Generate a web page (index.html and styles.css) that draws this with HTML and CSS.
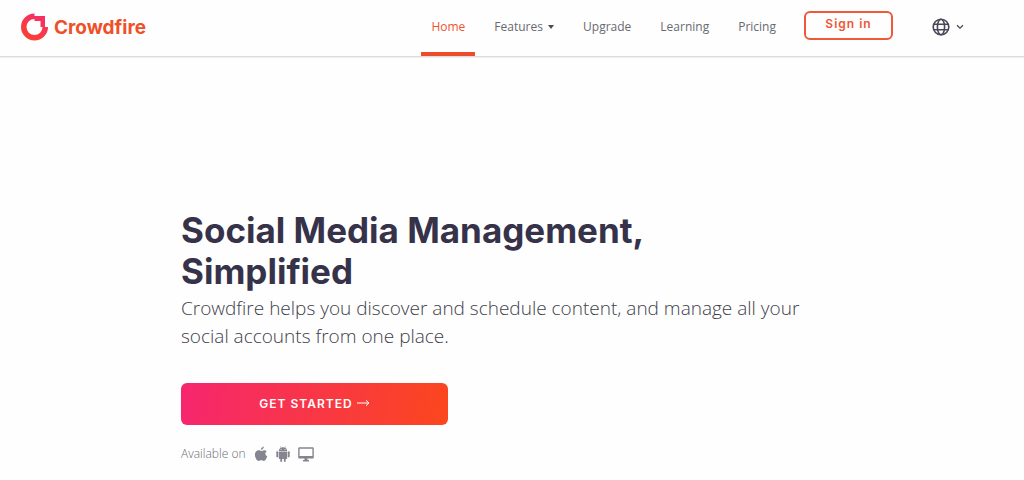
FILE: index.html
```html
<!DOCTYPE html>
<html lang="en">
<head>
<meta charset="utf-8">
<meta name="viewport" content="width=device-width, initial-scale=1">
<title>Crowdfire</title>
<link rel="stylesheet" href="styles.css">
</head>
<body>
<header class="header">
  <a class="brand" href="#">
    <svg class="brand-mark" viewBox="0 0 28 28" aria-hidden="true">
      <defs><linearGradient id="flame" x1="1" y1="0" x2="0.4" y2="1"><stop offset="0" stop-color="#f42a72"/><stop offset="1" stop-color="#fa4032"/></linearGradient></defs>
      <path fill="url(#flame)" d="M14 .5V3H24.500V14H27.500A13.500 13.500 0 1 1 14 .5ZM14 6A8 8 0 1 0 22 14H20V8H14Z"/>
    </svg>
    <span>Crowdfire</span>
  </a>
  <nav class="nav" aria-label="Main">
    <a class="nav-link active" href="#">Home</a>
    <a class="nav-link" href="#">Features <span class="caret"></span></a>
    <a class="nav-link" href="#">Upgrade</a>
    <a class="nav-link" href="#">Learning</a>
    <a class="nav-link" href="#">Pricing</a>
  </nav>
  <button class="sign-in" type="button">Sign in</button>
  <button class="language" type="button" aria-label="Language">
    <svg class="globe" viewBox="0 0 18 18" fill="none" stroke="currentColor" stroke-width="1.6" aria-hidden="true"><circle cx="9" cy="9" r="7.800"/><ellipse cx="9" cy="9" rx="3.600" ry="7.800"/><path d="M1.800 6.300H16.200M1.800 11.700H16.200"/></svg>
    <svg class="chevron" viewBox="0 0 8 6" fill="none" stroke="currentColor" stroke-width="1.300" aria-hidden="true"><path d="M1 1.200L4 4.200L7 1.200"/></svg>
  </button>
</header>
<main class="hero">
  <h1 class="title">Social Media Management, Simplified</h1>
  <p class="lead">Crowdfire helps you discover and schedule content, and manage all your social accounts from one place.</p>
  <button class="cta" type="button">GET STARTED <svg class="arrow" viewBox="0 0 13 8" fill="none" stroke="currentColor" aria-hidden="true"><path d="M0 4H12M9 1.300L12 4L9 6.700"/></svg></button>
  <div class="platforms">
    <span>Available on</span>
    <svg class="apple" viewBox="0 0 14 16" fill="currentColor" role="img" aria-label="Apple"><path d="M9.800.5C9.900 2.300 8.500 3.800 6.900 3.900 6.700 2.300 8.200.7 9.800.5ZM12.600 5.500C11 6.500 10.700 8.900 13.200 10.300 12.500 12.600 11.200 14.800 9.900 14.900 8.900 15 8.500 14.300 7.300 14.300 6.100 14.300 5.600 15 4.700 15 2.700 14.900.9 11.500.9 8.800.9 6 2.700 4.300 4.600 4.300 5.700 4.300 6.500 5 7.300 5 8 5 9 4.200 10.300 4.200 11.300 4.200 12.100 4.700 12.600 5.500Z"/></svg>
    <svg class="android" viewBox="0 0 14 16" fill="currentColor" role="img" aria-label="Android"><path fill-rule="evenodd" d="M2.800 4.900C2.900 3.400 3.700 2.300 4.900 1.700L4.200.4 4.600.2 5.300 1.500A5 5 0 0 1 8.700 1.500L9.400.2 9.800.4 9.100 1.700C10.300 2.300 11.100 3.400 11.200 4.900ZM4.600 3V3.800H5.400V3ZM8.600 3V3.800H9.400V3Z"/><path d="M2.800 5.400H11.200V12.200Q11.200 13 10.400 13H9.700V15.200Q9.700 16 8.800 16 7.900 16 7.900 15.200V13H6.100V15.200Q6.100 16 5.200 16 4.300 16 4.300 15.200V13H3.600Q2.800 13 2.800 12.200Z"/><rect x="0.300" y="5.300" width="1.900" height="6" rx=".9"/><rect x="11.800" y="5.300" width="1.900" height="6" rx=".9"/></svg>
    <svg class="desktop" viewBox="0 0 16 15" fill="currentColor" role="img" aria-label="Desktop"><path fill-rule="evenodd" d="M1.300.3H14.700Q15.800.3 15.800 1.400V10.500Q15.800 11.600 14.700 11.600H9.500V13H11V14.400H5V13H6.500V11.600H1.300Q.2 11.600.2 10.500V1.400Q.2.3 1.300.3ZM1.600 1.700V9.100H14.400V1.700Z"/></svg>
  </div>
</main>
</body>
</html>
```
FILE: styles.css
```css
* {
  box-sizing: border-box;
}

body {
  margin: 0;
  background: #fefefe;
  color: #36324a;
  font-family: "Open Sans", "Noto Sans", sans-serif;
}

button {
  font-family: inherit;
  cursor: pointer;
}

.header {
  display: flex;
  align-items: stretch;
  height: 57px;
  padding: 0 60px 0 20px;
  border-bottom: 1px solid #dcdcdc;
  box-shadow: 0 1px 1px #f0f0f0;
}

.brand {
  display: flex;
  align-items: center;
  gap: 5px;
  margin-right: auto;
  padding-bottom: 2px;
  color: #ee5129;
  font: 700 19px Inter, sans-serif;
  text-decoration: none;
}

.brand-mark {
  width: 29px;
  height: 28px;
}

.nav {
  display: flex;
  gap: 9px;
}

.nav-link {
  padding: 17px 10px 0;
  border-bottom: 4px solid transparent;
  color: #696971;
  font-size: 12px;
  line-height: 20px;
  text-decoration: none;
}

.nav-link.active {
  border-color: #ee4b2b;
  color: #f0532f;
}

.caret {
  display: inline-block;
  margin-left: 2px;
  border: 3px solid transparent;
  border-top: 4px solid #4b4b55;
  border-bottom: 0;
  vertical-align: 2px;
}

.sign-in {
  align-self: flex-start;
  width: 89px;
  height: 29px;
  margin: 11px 39px 0 18px;
  padding: 0 0 4px;
  border: 2px solid #ee5a38;
  border-radius: 6px;
  background: transparent;
  color: #ee5532;
  font: 600 12px Inter, sans-serif;
  letter-spacing: 1px;
}

.language {
  display: flex;
  align-items: center;
  gap: 6px;
  padding: 0 0 2px;
  border: 0;
  background: transparent;
  color: #4a4757;
}

.globe {
  width: 18px;
  height: 18px;
}

.chevron {
  width: 8px;
  height: 6px;
}

.hero {
  box-sizing: content-box;
  max-width: 640px;
  padding: 153px 20px 0 181px;
}

.title {
  max-width: 500px;
  margin: 0;
  font: 700 35px/41px Inter, sans-serif;
}

.lead {
  margin: 2px 0 33px;
  color: #40404a;
  font-size: 19px;
  font-weight: 300;
  line-height: 28px;
}

.cta {
  display: flex;
  align-items: center;
  justify-content: center;
  gap: 4px;
  width: 267px;
  height: 42px;
  padding: 0 0 2px;
  border: 0;
  border-radius: 6px;
  background: linear-gradient(100deg, #f6266f, #fb471d);
  color: #fff;
  font: 600 12px Inter, sans-serif;
  letter-spacing: 1px;
}

.arrow {
  width: 13px;
  height: 8px;
}

.platforms {
  display: flex;
  align-items: center;
  gap: 8px;
  margin-top: 20px;
  color: #85858f;
  font-size: 12px;
  font-weight: 300;
  line-height: 18px;
}

.platforms span {
  color: #6c6c76;
}

.apple,
.android {
  width: 14px;
  height: 16px;
}

.desktop {
  width: 16px;
  height: 15px;
}
```
